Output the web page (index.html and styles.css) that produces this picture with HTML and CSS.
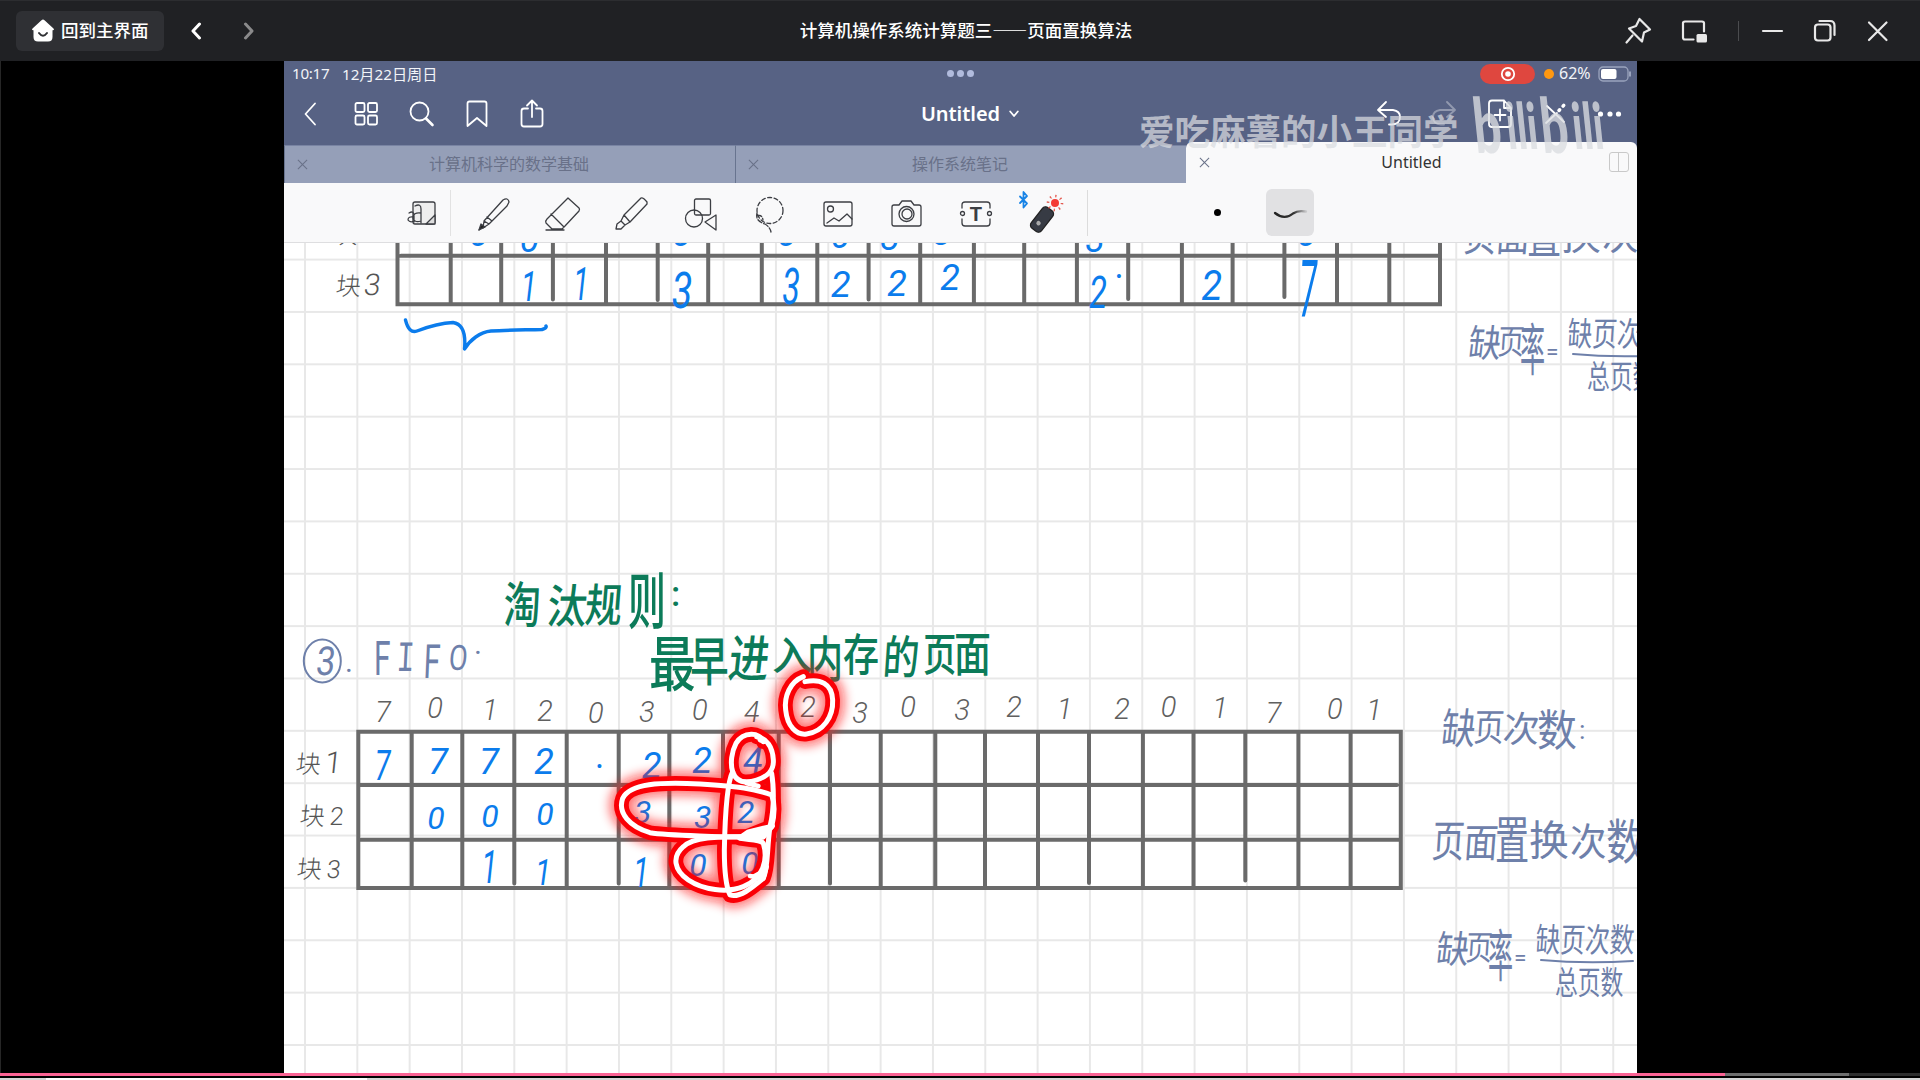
FILE: index.html
```html
<!DOCTYPE html>
<html lang="zh-CN">
<head>
<meta charset="utf-8">
<title>计算机操作系统计算题三——页面置换算法</title>
<link rel="stylesheet" href="styles.css">
</head>
<body>
<div class="window">
  <header class="titlebar">
    <div class="titlebar-left">
      <button class="home"><svg width="24" height="24" viewBox="0 0 24 24"><path d="M12 0.500 Q12.800 .5 13.500 1.200 L22.500 9.500 Q23.800 11 22 11.300 H21.500 V18 Q21.500 22.500 17 22.500 H7 Q2.500 22.500 2.500 18 V11.300 H2 Q.2 11 1.500 9.500 L10.500 1.200 Q11.200 .5 12 .5Z" fill="#fff"/><path d="M8 14 Q12 19.500 16 14" fill="none" stroke="#2f3034" stroke-width="2" stroke-linecap="round"/></svg><span>回到主界面</span></button>
      <svg class="arrow" width="12" height="18" viewBox="0 0 12 18"><path d="M9.500 2 L3 9 L9.500 16"/></svg>
      <svg class="arrow dim" width="12" height="18" viewBox="0 0 12 18"><path d="M2.500 2 L9 9 L2.500 16"/></svg>
    </div>
    <h1 class="title">计算机操作系统计算题三——页面置换算法</h1>
    <div class="titlebar-right">
      <svg width="28" height="28" viewBox="0 0 28 28"><path d="M15.500 2 L26 12.500 L20 15.500 L18 24.500 L5 11.500 L12 9 Z M8.500 18.500 L2.500 25.500"/></svg>
      <svg width="28" height="28" viewBox="0 0 28 28"><path d="M13.500 22.500 H5 Q3 22.500 3 20.500 V6 Q3 4.500 5 4.500 H22 Q24 4.500 24 6 V14.500"/><rect x="16.500" y="17" width="10.500" height="8.500" rx="1.500" fill="#e8e8e8" stroke="none"/></svg>
      <i class="bar-sep"></i>
      <svg width="28" height="28" viewBox="0 0 28 28"><path d="M5 14 H24"/></svg>
      <svg width="28" height="28" viewBox="0 0 28 28"><rect x="4" y="7.500" width="15.500" height="16" rx="3"/><path d="M8.500 4 H19 Q23.500 4 23.500 8.500 V18"/></svg>
      <svg width="28" height="28" viewBox="0 0 28 28"><path d="M5 5.500 L22.500 23 M22.500 5.500 L5 23"/></svg>
    </div>
  </header>

  <main class="stage">
    <div class="app">
      <div class="status">
        <span class="time">10:17</span><span>12月22日周日</span>
        <div class="status-dots"><i></i><i></i><i></i></div>
        <div class="status-right">
          <span class="rec"><svg width="16" height="16" viewBox="0 0 16 16"><circle cx="8" cy="8" r="6.200" fill="none" stroke="#fff" stroke-width="1.800"/><circle cx="8" cy="8" r="2.800" fill="#fff"/></svg></span>
          <i class="mic"></i><span class="pct">62%</span>
          <svg width="34" height="16" viewBox="0 0 34 16"><rect x="1" y="1" width="29" height="14" rx="4" fill="none" stroke="#9aa4bd" stroke-width="1.300"/><rect x="3" y="3" width="15.500" height="10" rx="2" fill="#fff"/><path d="M32 5.500 V10.500" stroke="#9aa4bd" stroke-width="2"/></svg>
        </div>
      </div>

      <nav class="nav">
        <div class="nav-left">
          <svg viewBox="0 0 30 30"><path d="M19 4.500 L9.500 15 L19 25.500"/></svg>
          <svg viewBox="0 0 30 30"><rect x="4.500" y="4" width="9" height="9" rx="1.500"/><rect x="17" y="4" width="9" height="9" rx="1.500"/><rect x="4.500" y="16.500" width="9" height="9" rx="1.500"/><rect x="17" y="16.500" width="9" height="9" rx="1.500"/></svg>
          <svg viewBox="0 0 30 30"><circle cx="13.500" cy="12.500" r="9"/><path d="M20 19.500 L26.500 26" stroke-width="2.600"/></svg>
          <svg viewBox="0 0 30 30"><path d="M5.500 27 V4.500 Q5.500 2.500 7.500 2.500 H22.500 Q24.500 2.500 24.500 4.500 V27 L15 19 Z"/></svg>
          <svg viewBox="0 0 30 30"><path d="M11 9.500 H7 Q4.500 9.500 4.500 12 V25 Q4.500 27.500 7 27.500 H23 Q25.500 27.500 25.500 25 V12 Q25.500 9.500 23 9.500 H19 M15 18 V2 M10 6.500 L15 1.500 L20 6.500"/></svg>
        </div>
        <div class="doc">Untitled<svg width="10" height="8" viewBox="0 0 10 8"><path d="M1.200 1.500 L5 6 L8.800 1.500"/></svg></div>
        <div class="nav-right">
          <svg viewBox="0 0 30 30"><path d="M12 3 L4 11 L12 18 M4 11 H19 Q26 12 26 18 Q26 25 18 25.500 H15"/></svg>
          <svg class="faded" viewBox="0 0 30 30"><path d="M18 3 L26 11 L18 18 M26 11 H11 Q4 12 4 18 Q4 25 12 25.500 H15"/></svg>
          <svg viewBox="0 0 30 30"><path d="M19 1.500 H7 Q4 1.500 4 4.500 V25 Q4 28 7 28 H23 Q26 28 26 25 V9 Z M19 1.500 V9 H26 M15 10.500 V21.500 M9.500 16 H20.500"/></svg>
          <svg viewBox="0 0 30 30"><path d="M7 7 L24 23 M6 24 L17 14"/><path d="M19 11.500 L24 6" stroke-width="3.500" stroke-dasharray="1 5"/></svg>
          <svg viewBox="0 0 30 30"><g fill="#fff" stroke="none"><circle cx="5.500" cy="15" r="2.600"/><circle cx="15" cy="15" r="2.600"/><circle cx="23.500" cy="15" r="2.600"/></g></svg>
        </div>
      </nav>

      <div class="tabs">
        <div class="tab"><i class="x"></i><span>计算机科学的数学基础</span></div>
        <div class="tab"><i class="x"></i><span>操作系统笔记</span></div>
        <div class="tab active"><i class="x"></i><span>Untitled</span><i class="split"></i></div>
      </div>

      <div class="tools">
        <div class="tool-first"><svg width="34" height="36" viewBox="0 0 34 36"><rect x="8" y="7" width="22" height="22" rx="2" fill="#eee"/><path d="M21 29 L30 20 V29 Z" fill="#ddd"/><path d="M10 11 Q16 8 16 14 V28 M16 18 Q8 17 8 23 Q9 28 16 26 M4 18 Q9 15 9 21 V27 M9 22 Q3 21 3 25 Q5 28 9 26"/></svg></div>
        <div class="tool-row">
          <div><svg width="36" height="36" viewBox="0 0 36 36"><path d="M8 25 L27 4 Q32 1 33 6 L31 10 L13 28 L7 32 Z M8 25 L13 28 M11 21 L16 25 M3 34 L5 31"/><path d="M3 34 L5 28 L9 31Z" fill="#222"/></svg></div>
          <div><svg width="38" height="36" viewBox="0 0 38 36"><path d="M24 2 L35 12 Q36 13 35 15 L21 30 L18 33 H8 L2 27 Q1 25 3 23 Z M7 18 L20 31 M2 34 H20"/></svg></div>
          <div><svg width="38" height="36" viewBox="0 0 38 36"><path d="M11 19 L28 2 Q30 1 34 6 V8 L17 26 Z M11 19 L8 25 L12 29 L17 26 M8 25 L4 28 L3 33 H8 L12 29"/></svg></div>
          <div><svg width="36" height="36" viewBox="0 0 36 36"><rect x="11.500" y="3" width="16" height="16" rx="1.500"/><circle cx="11" cy="22.500" r="8.500"/><path d="M22 26 L33 19 V34 Z"/></svg></div>
          <div><svg width="36" height="38" viewBox="0 0 36 38"><circle cx="18" cy="15.500" r="13" stroke-dasharray="4 2.500"/><path d="M5 18 Q3 26 13 29 Q18 32 19 37 M5 21 Q10 19 11 25" stroke-dasharray="5 2"/></svg></div>
          <div><svg width="34" height="32" viewBox="0 0 34 32"><rect x="3" y="4" width="28" height="24" rx="2"/><circle cx="9.500" cy="11" r="3"/><path d="M6 25 L13 20 L18 23 L26 16 L31 21"/></svg></div>
          <div><svg width="34" height="32" viewBox="0 0 34 32"><path d="M2 9 Q2 7 4 7 H9 L12 3 H21 L24 7 H29 Q31 7 31 9 V26 Q31 28 29 28 H4 Q2 28 2 26Z"/><circle cx="16.500" cy="16" r="7.500"/><circle cx="17" cy="16" r="5"/></svg></div>
          <div class="text-tool"><svg width="34" height="32" viewBox="0 0 34 32"><path d="M3 10 V7 Q3 4 6 4 H28 Q31 4 31 7 V10 M3 21 V25 Q3 28 6 28 H28 Q31 28 31 25 V21"/><circle cx="3.500" cy="15.500" r="2"/><circle cx="30.500" cy="15.500" r="2"/></svg><b>T</b></div>
          <div><svg width="50" height="44" viewBox="0 0 50 44"><path d="M-1 4.500 L6 11.500 L2.500 15.500 V0 L6 4 L-1 11" stroke="#1783e6" stroke-width="1.800" transform="translate(1 0)"/><g transform="translate(-4 -3) rotate(38 25 31)"><rect x="19" y="17" width="13" height="26" rx="4" fill="#373b44" stroke="#222"/><circle cx="25" cy="35" r="2.200" fill="#aaa" stroke="none"/></g><circle cx="35" cy="11" r="4" fill="#f43b35" stroke="none"/><circle cx="35" cy="11" r="7" stroke="#e35a50" stroke-width="2.600" stroke-linecap="butt" stroke-dasharray="1.300 4.200"/></svg></div>
        </div>
        <div class="stroke-opts"><i class="dot"></i><div class="stroke-type"><svg width="36" height="20" viewBox="0 0 36 20"><defs><linearGradient id="ink"><stop offset="0" stop-color="#222"/><stop offset=".6" stop-color="#333"/><stop offset="1" stop-color="#c8c8ca"/></linearGradient></defs><path d="M3 10 C9 15 16 15 21 10.500 Q26 7 34 8.500" stroke="url(#ink)" stroke-width="2.300"/></svg></div></div>
      </div>

      <svg class="canvas" width="1353" height="830" viewBox="284 243 1353 830">
        <defs>
          <pattern id="paper" x="304" y="258.600" width="52.330" height="52.360" patternUnits="userSpaceOnUse"><path d="M1 0 V53 M0 1 H53" stroke="#e8e8e8" stroke-width="2"/></pattern>
          <filter id="glow" x="-20%" y="-20%" width="140%" height="140%"><feGaussianBlur stdDeviation="16"/></filter>
          <g id="laser">
            <path d="M610 380 C570 395 552 440 557 480 C562 530 590 556 620 552 C670 545 700 500 698 450 C696 400 660 385 615 395"/>
            <path d="M490 575 C480 545 430 545 408 580 C395 605 390 640 398 665 C410 700 440 700 470 690 C500 680 522 665 520 630 C518 590 500 565 470 560"/>
            <path d="M515 735 C460 715 420 710 300 702 C180 696 90 700 68 745 C52 790 90 830 150 848 C200 856 400 862 440 860 L515 830 C525 790 525 760 515 735"/>
            <path d="M398 665 C380 700 375 800 373 900 C373 960 378 1010 390 1035 C420 1045 460 1010 490 985 C505 950 500 900 510 830 C525 770 520 700 515 670"/>
            <path d="M440 860 C350 860 280 860 250 890 C215 920 222 960 265 990 C310 1020 380 1030 430 1010 C490 985 505 930 490 880 C480 868 450 870 420 865"/>
          </g>
        </defs>
        <rect x="284" y="243" width="1353" height="830" fill="url(#paper)"/>

        <!-- upper table -->
        <path class="rule" d="M397.500 240 V304.300 H1440 V240 M401 255.700 H1440 M450.700 240 V304 M501.200 240 V304 M552.900 240 V299.500 M606 240 V304 M657.700 240 V300 M708.200 240 V304 M761.800 240 V304 M817.300 240 V304 M868.600 240 V299.500 M920.200 240 V304 M973.900 240 V304 M1024.200 240 V304 M1076.900 240 V304 M1128.200 240 V299 M1181.900 240 V304 M1232.600 240 V304 M1284.400 240 V297 M1337 240 V304 M1389.300 240 V304"/>
        <text class="label" transform="translate(335 295) skewX(-6)">块<tspan class="big" dx="3">3</tspan></text>
        <text class="label" x="332" y="243">块2</text>
        <text class="pen" x="479 529.500 681.800 787 840.600 890 942 1095 1306.800" y="246 252 246 246 248 250 245 252 246">000003330</text>
        <text class="pen" transform="translate(528.800 301) scale(.8 1.200)">1</text><text class="pen" transform="translate(581 299.500) scale(.8 1.300)">1</text>
        <text class="pen" transform="translate(682 308) scale(1.050 1.400)">3</text><text class="pen" transform="translate(791 304) scale(.9 1.400)">3</text>
        <text class="pen" x="840.700 897 950" y="297 296 290">222</text>
        <text class="pen" transform="translate(1098 308) scale(.9 1.250)">2</text><text class="pen" transform="translate(1211.700 300) scale(1.050 1.200)">2</text>
        <text class="pen" x="1120.700" y="278">.</text>
        <text class="pen" transform="translate(1308 317) scale(.9 2.200)">7</text>
        <path class="brace" d="M405.500 320 Q409 334 417 331 C430 326 440 323 453 322.500 C463 324 466 333 464.500 349 C470 340 480 332 491 331 C505 330 520 330 542 329.500 Q547 328 546 326"/>

        <!-- section heading -->
        <g class="slate">
          <ellipse cx="322.300" cy="661" rx="18.500" ry="21.500" class="ring"/>
          <text class="heading" transform="translate(315 675) skewX(-6) scale(.85 1)">3</text><text x="345" y="672">.</text>
          <text class="heading" transform="translate(374 675) scale(.75 1.180)">F</text><text class="heading barred" transform="translate(396 671) scale(.75 1.080) skewX(-4)">I</text><text class="heading" transform="translate(423 678) scale(.75 1.180) skewX(-4)">F</text><text class="heading" transform="translate(448 670) scale(.68 .88) skewX(-6)">O</text><text x="474" y="663">·</text>
        </g>
        <g class="green">
          <text transform="translate(503 623) scale(.84 1.130) skewX(-3)">淘</text><text transform="translate(546 623) scale(.9 1.050) skewX(-6)">汰</text><text transform="translate(584 622) scale(.84 1.050) skewX(-6)">规</text><text transform="translate(628 624) scale(.86 1.400)">则</text><text transform="translate(671 606) scale(.8)">:</text>
          <text transform="translate(649 686) scale(1.060 1.380)">最</text><text transform="translate(690 681) scale(.88 1.200)">早</text><text transform="translate(727 677) scale(.92 1.150) skewX(-8)">进</text><text transform="translate(772 670) scale(.92 .9)">入</text><text transform="translate(807 677) scale(.82 1.120)">内</text><text transform="translate(843 671) scale(.82 1.020)">存</text><text transform="translate(882 674) scale(.82 1.050) skewX(-5)">的</text><text transform="translate(923 671) scale(.76 1.040)">页</text><text transform="translate(954 671) scale(.84 1.060)">面</text>
        </g>

        <!-- lower table -->
        <text class="seq" x="383 435 490 545 595.700 646.700 699.700 751.700 808 860 908 962 1014 1064.500 1122 1168.600 1220 1273.500 1334.700 1374" y="722 718 720 721 723 722 720 722 717 723 717 720 717 719 719 717 718 723 719 720">70120304230321201701</text>
        <path class="rule" d="M358.300 731.700 H1400.800 V888 H358.300 Z M358.300 785 H1397 M361 839.700 H1400 M411.700 732 V888 M462.300 732 V888 M514.300 732 V883.500 M566.700 732 V888 M618.700 732 V883.500 M669.300 732 V888 M723 732 V888 M778.700 732 V888 M830 732 V883.500 M880.700 732 V888 M935.300 732 V888 M985 732 V888 M1038 732 V888 M1089 732 V883 M1142.900 732 V888 M1193.500 732 V888 M1245.300 732 V880.500 M1298.400 732 V888 M1350.600 732 V888"/>
        <text class="label" transform="translate(295 773) skewX(-6)">块<tspan class="big" dx="4">1</tspan></text>
        <text class="label" transform="translate(299 825) skewX(-6)">块<tspan dx="5">2</tspan></text>
        <text class="label" transform="translate(296 878) skewX(-6)">块<tspan dx="5">3</tspan></text>
        <text class="pen" transform="translate(382.700 780) scale(.8 1.200)">7</text>
        <text class="pen" x="438 489 544 601 651.700 702 753" y="774 774 774 768 778 773 773">772.224</text>
        <text class="pen small" x="436 490 545 642.700 702.700 745.700" y="829 827 825 823 828 823">000332</text>
        <text class="pen" transform="translate(489.300 883) scale(.8 1.300)">1</text>
        <text class="pen" transform="translate(543 885) scale(.8 1)">1</text>
        <text class="pen" transform="translate(641 887) scale(.8 1.200)">1</text>
        <text class="pen small" x="698 750" y="876 874">00</text>

        <!-- laser pointer trail -->
        <g transform="translate(600 550) scale(.33333)" fill="none" stroke-linecap="round" stroke-linejoin="round">
          <use href="#laser" stroke="#ff1010" stroke-width="70" opacity=".6" filter="url(#glow)"/>
          <use href="#laser" stroke="#fa0006" stroke-width="44"/>
          <use href="#laser" stroke="#fff" stroke-width="15"/>
          <path d="M418 864 L445 845 L518 828 L490 862 Z M450 978 L490 985 L500 950 M440 700 L475 708 M480 570 L492 575" fill="#fff" stroke="#fff" stroke-width="14"/>
        </g>

        <!-- summary notes beside the lower table -->
        <g class="slate notes">
          <text transform="translate(1440 744) scale(.9 1.120) skewX(-8)">缺</text><text transform="translate(1473 741) scale(.8 1) skewX(-5)">页</text><text transform="translate(1502 742) scale(.96 .95) skewX(-5)">次</text><text transform="translate(1537 746) scale(1.050 1.150)">数</text><text transform="translate(1579 739) scale(.7)">:</text>
        </g>
        <g class="slate notes">
          <text transform="translate(1431 857) scale(.86 1.150) skewX(-5)">页</text><text transform="translate(1463 857) scale(.9 1.050) skewX(-5)">面</text><text transform="translate(1495 859) scale(.9 1.350)">置</text><text transform="translate(1529 855) scale(1.050 1.080)">换</text><text transform="translate(1570 855) scale(.96 1)">次</text><text transform="translate(1606 859) scale(1.040 1.250)">数</text>
          <text transform="translate(1435 963) scale(.86 1) skewX(-8)">缺</text><text transform="translate(1465 960) scale(.7 .9) skewX(-5)">页</text><text transform="translate(1488 976) scale(.66 1.480)">率</text><text transform="translate(1514 965) scale(.6)">=</text>
          <text transform="translate(1535 952) scale(.65 .88) skewX(-5)">缺页次数</text><path d="M1541 960 Q1585 964 1633 961"/><text transform="translate(1555 994) scale(.6 .84)">总页数</text>
        </g>
        <!-- the same notes beside the upper table -->
        <g class="slate notes" transform="translate(32 -606)">
          <text transform="translate(1431 857) scale(.86 1.150) skewX(-5)">页</text><text transform="translate(1463 857) scale(.9 1.050) skewX(-5)">面</text><text transform="translate(1495 859) scale(.9 1.350)">置</text><text transform="translate(1529 855) scale(1.050 1.080)">换</text><text transform="translate(1570 855) scale(.96 1)">次</text>
          <text transform="translate(1435 963) scale(.86 1) skewX(-8)">缺</text><text transform="translate(1465 960) scale(.7 .9) skewX(-5)">页</text><text transform="translate(1488 976) scale(.66 1.480)">率</text><text transform="translate(1514 965) scale(.6)">=</text>
          <text transform="translate(1535 952) scale(.65 .88) skewX(-5)">缺页次</text><path d="M1541 960 Q1585 964 1633 961"/><text transform="translate(1555 994) scale(.6 .84)">总页数</text>
        </g>
      </svg>

      <div class="watermark"><span>爱吃麻薯的小王同学</span><svg width="140" height="66" viewBox="0 0 140 66"><g transform="translate(7 59) skewX(6)"><text transform="scale(1.220 1.900)">b</text><text transform="translate(33 -4) scale(1 1.600)">ili</text><text transform="translate(67 0) scale(1.220 1.900)">b</text><text transform="translate(99 -4) scale(1 1.600)">ili</text></g></svg></div>
    </div>
  </main>

  <div class="progress"><i class="played"></i><i class="buffered"></i></div>
  <div class="desktop-edge"><i></i></div>
</div>
</body>
</html>
```
FILE: styles.css
```css
* { box-sizing: border-box; }
body { margin: 0; background: #000; font-family: "Noto Sans CJK SC", sans-serif; overflow: hidden; }
svg { display: block; flex: none; }
.window { width: 1920px; height: 1080px; display: flex; flex-direction: column; }

.titlebar { height: 61px; flex: none; display: grid; grid-template-columns: 1fr auto 1fr; align-items: center; background: #202124; border-top: 1px solid #2c2d30; color: #fff; }
.titlebar-left { display: flex; align-items: center; padding-left: 16px; }
.home { width: 148px; height: 40px; display: flex; align-items: center; gap: 6px; padding: 0 0 3px 15px; border: 0; border-radius: 6px; background: #2f3034; color: #fff; font: 500 17.5px "Noto Sans CJK SC", sans-serif; white-space: nowrap; }
.home svg { margin-top: 3px; }
.arrow { margin-left: 26px; fill: none; stroke: #fff; stroke-width: 3; stroke-linecap: round; stroke-linejoin: round; }
.arrow.dim { margin-left: 41px; stroke: #8a8a8b; }
.title { margin: 0; padding: 0 0 3px 12px; font-size: 17.5px; font-weight: 500; line-height: 26px; }
.titlebar-right { display: flex; align-items: center; justify-content: flex-end; gap: 28px; padding: 0 28px 1px 0; }
.titlebar-right svg { fill: none; stroke: #e8e8e8; stroke-width: 2.2; stroke-linecap: round; stroke-linejoin: round; }
.titlebar-right svg:nth-of-type(n+4) { margin-left: -3px; }
.bar-sep { width: 1px; height: 20px; margin: 0 -9px 0 2px; background: #4b4c4f; }

.stage { height: 1012px; flex: none; display: flex; justify-content: center; border-left: 1px solid #262626; }
.app { position: relative; width: 1353px; height: 1012px; display: flex; flex-direction: column; background: #576284; overflow: hidden; }

.status { position: relative; height: 25px; flex: none; display: flex; align-items: center; padding: 0 5px 0 8px; color: #f2f4f8; font: 15.2px "Noto Sans", "Noto Sans CJK SC", sans-serif; }
.status > span { padding-bottom: 2px; }
.status .time { width: 50px; letter-spacing: -.3px; }
.status-dots { position: absolute; left: 663px; top: 9px; display: flex; gap: 3px; }
.status-dots i { width: 7px; height: 7px; border-radius: 50%; background: #b1bbdd; }
.status-right { margin-left: auto; display: flex; align-items: center; }
.rec { width: 55px; height: 20px; display: flex; align-items: center; justify-content: center; border-radius: 10px; background: #df473f; }
.mic { width: 10px; height: 10px; margin: 0 5px 0 9px; border-radius: 50%; background: #ff9811; }
.pct { width: 39px; padding-bottom: 2px; font-size: 16px; }

.nav { height: 56px; flex: none; display: grid; grid-template-columns: 1fr auto 1fr; align-items: center; color: #fff; }
.nav svg { fill: none; stroke: #fff; stroke-width: 1.8; stroke-linecap: round; stroke-linejoin: round; }
.nav-left, .nav-right { display: flex; gap: 25.2px; }
.nav-left { padding-left: 12px; }
.nav-right { justify-content: flex-end; padding-right: 12px; }
.nav-left > svg, .nav-right > svg { width: 30px; height: 30px; }
.faded { opacity: .35; }
.doc { display: flex; align-items: center; gap: 9px; padding-left: 19px; font: 600 20px/30px "Noto Sans", sans-serif; letter-spacing: -.05px; }

.tabs { height: 41px; flex: none; display: flex; align-items: flex-end; }
.tab { width: 451px; height: 38px; display: grid; grid-template-columns: 36px 1fr 36px; align-items: center; text-align: center; background: #959fb8; border-top: 1px solid #7984a3; border-left: 1px solid #68748f; color: #697189; font-size: 16px; }
.tab > span { padding: 0 2px 3px 0; }
.tab.active { height: 41px; background: #f9f9fa; border: 0; border-radius: 6px 6px 0 0; color: #333; font-family: "Noto Sans", sans-serif; }
.tab.active > span { padding: 0 0 1px; }
.tab.active .x { margin-left: 13px; }
.x { position: relative; width: 11px; height: 11px; margin-left: 12px; }
.x::before, .x::after { content: ""; position: absolute; left: -1px; top: 5px; width: 13px; height: 1px; background: #687087; transform: rotate(45deg); }
.x::after { transform: rotate(-45deg); }
.split { width: 20px; height: 20px; margin: 0 0 2px 8px; border: 1.5px solid #c9c9c9; border-radius: 3px; background: linear-gradient(90deg, transparent 8px, #c9c9c9 8px 9px, transparent 9px); }

.tools { height: 60px; flex: none; display: flex; align-items: center; background: #f9f9fa; border-bottom: 1px solid #dedee0; }
.tools svg { fill: none; stroke: #3c3e43; stroke-width: 1.3; stroke-linecap: round; stroke-linejoin: round; overflow: visible; }
.tool-first { width: 167px; height: 46px; display: flex; align-items: center; justify-content: flex-end; padding: 1px 11px 0 0; border-right: 1px solid #e2e2e2; }
.tool-row { height: 46px; display: flex; align-items: center; padding: 2px 0 0 9px; border-right: 1px solid #dcdcdc; width: 637px; }
.tool-row > div { width: 68.8px; flex: none; display: grid; justify-items: center; align-items: center; }
.text-tool > * { grid-area: 1 / 1; }
.text-tool b { font: 700 20px/20px "Liberation Sans", sans-serif; color: #3c3e43; }
.stroke-opts { flex: 1; display: flex; align-items: center; padding-left: 126px; gap: 45px; }
.dot { width: 7px; height: 7px; border-radius: 50%; background: #000; }
.stroke-type { width: 48px; height: 47px; display: grid; place-items: center; border-radius: 6px; background: #e1e1e3; }

.canvas { background: #fff; }
.canvas text { font-family: "Roboto", "Noto Sans CJK SC", sans-serif; }
.rule { fill: none; stroke: #6a6a6a; stroke-width: 4; stroke-linecap: round; }
.label { font-size: 25px; font-weight: 300; fill: #555; }
.big { font-size: 30px; }
.seq { font-size: 29px; font-style: italic; font-weight: 300; text-anchor: middle; fill: #606060; }
.pen { font-size: 36px; font-style: italic; font-weight: 400; text-anchor: middle; fill: #0b7cec; }
.pen.small { font-size: 32px; }
.brace { fill: none; stroke: #0b7cec; stroke-width: 3.4; stroke-linecap: round; stroke-linejoin: round; }
.slate { fill: #6e80aa; font-weight: 400; font-size: 30px; }
.slate .heading { font-size: 40px; }
.slate .barred { font-family: "Liberation Mono", monospace; }
.slate path, .ring { fill: none; stroke: #6e80aa; stroke-width: 2; stroke-linecap: round; }
.slate.notes { font-size: 38px; }
.green { fill: #0c7b59; font-size: 44px; font-weight: 500; }

.watermark { position: absolute; left: 855px; top: 31px; display: flex; align-items: center; gap: 10px; color: rgba(218, 220, 224, .72); font-size: 35.5px; font-weight: 700; line-height: 62px; white-space: nowrap; pointer-events: none; }
.watermark span { padding-top: 7px; }
.watermark text { font: 900 40px "Lato", sans-serif; fill: rgba(218, 220, 224, .78); }

.progress { height: 3px; flex: none; display: flex; background: #2e2e2e; }
.played { width: 1725px; background: #fb6394; }
.buffered { width: 124px; background: #6e6e6e; }
.desktop-edge { height: 4px; flex: none; border-top: 2px solid #000; background: #d6d6d6; padding-left: 46px; }
.desktop-edge i { display: block; width: 321px; height: 2px; background: #fff; }
```
